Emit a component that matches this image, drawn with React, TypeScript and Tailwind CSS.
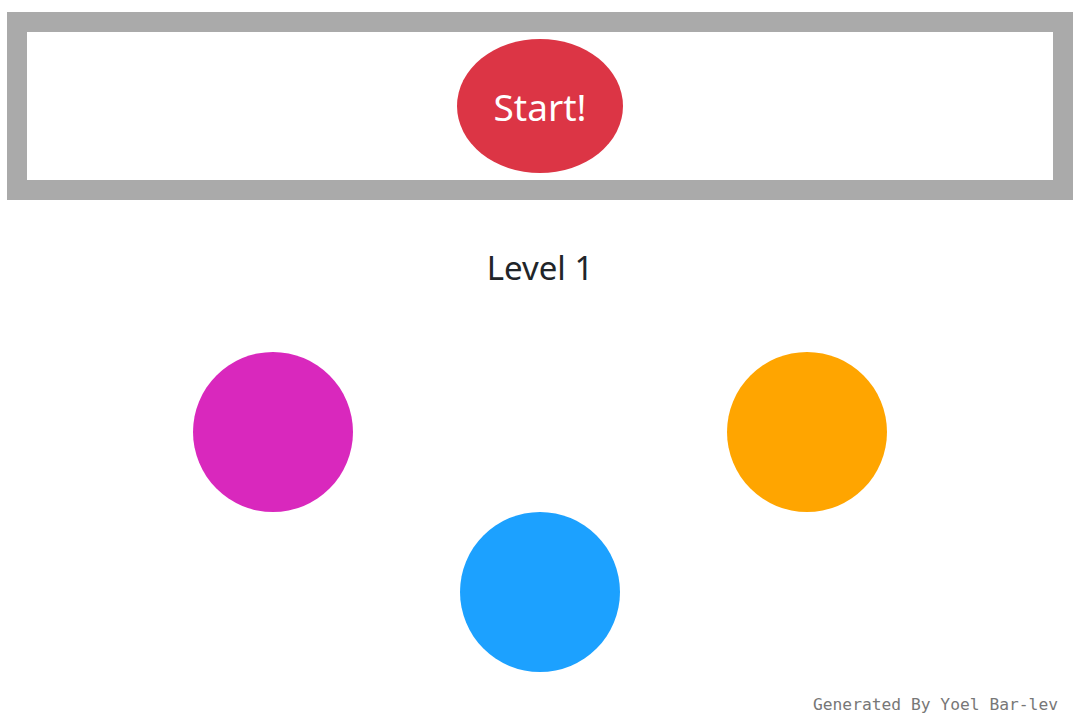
export default function App() {
  return (
    <div
      className="min-h-[728px] bg-white pr-[4px] text-[#212529]"
      style={{ fontFamily: '"Noto Sans", "Open Sans", sans-serif' }}
    >
      <div className="px-[7px] pt-[12px]">
        <div className="flex h-[188px] items-center justify-center border-[20px] border-[#aaaaaa] bg-white">
          <button className="flex h-[134px] w-[166px] items-center justify-center rounded-[50%] bg-[#dc3545] text-[37px] leading-none text-white">
            Start!
          </button>
        </div>
      </div>

      <h2 className="mt-[48px] text-center text-[33px] leading-[40px] font-normal">Level 1</h2>

      <div className="mt-[64px] grid grid-cols-[160px_160px_160px] grid-rows-[160px_160px] justify-center gap-x-[107px]">
        <div className="rounded-full bg-[#d928bd]" />
        <div />
        <div className="rounded-full bg-[#ffa500]" />
        <div />
        <div className="rounded-full bg-[#1ca1ff]" />
        <div />
      </div>

      <div
        className="mt-[23px] pr-[22px] text-right text-[16.3px] leading-[20px] text-[#777777]"
        style={{ fontFamily: '"DejaVu Sans Mono", "Liberation Mono", monospace' }}
      >
        Generated By Yoel Bar-lev
      </div>
    </div>
  );
}
